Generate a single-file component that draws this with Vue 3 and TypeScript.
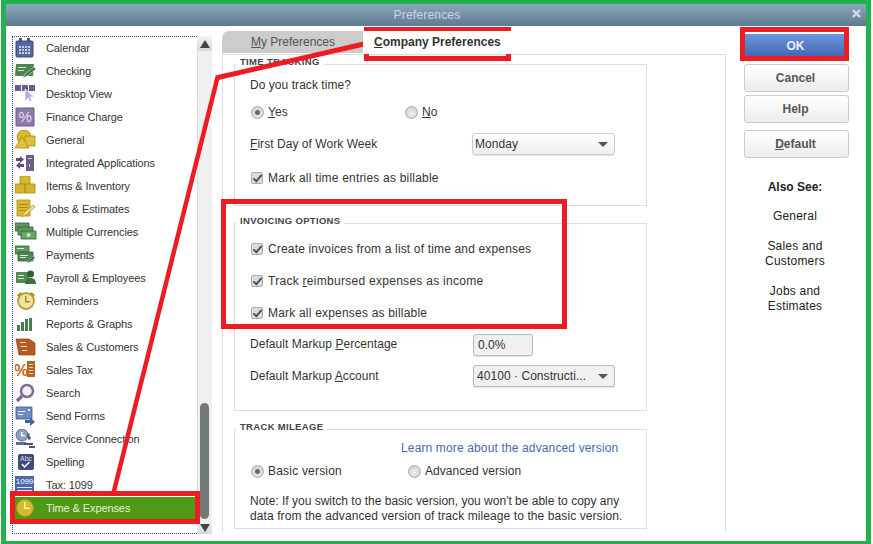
<script setup lang="ts">
interface Shape { d: string; f?: string; s?: string; w?: number }
interface Label { t: string; x: number; y: number; size: number; fill: string; bold?: boolean }
interface Pref { name: string; shapes: Shape[]; label?: Label }

const gold = '#d9b92e'
const goldDark = '#a88a1c'
const purple = '#6d5e8c'
const green = '#4b8550'
const greenDark = '#2f6038'

const circle = (cx: number, cy: number, r: number) =>
  `M${cx - r} ${cy}a${r} ${r} 0 1 0 ${2 * r} 0a${r} ${r} 0 1 0 ${-2 * r} 0z`

const prefs: Pref[] = [
  {
    name: 'Calendar',
    shapes: [
      { d: 'M2 3h15a1 1 0 0 1 1 1v14a1 1 0 0 1-1 1H2a1 1 0 0 1-1-1V4a1 1 0 0 1 1-1z', f: '#56699c', s: '#3c4b78', w: 1 },
      { d: 'M4 0h3v5H4zM12 0h3v5h-3z', f: '#47598a' },
      { d: 'M4 8h2v2H4zM7 8h2v2H7zM10 8h2v2h-2zM13 8h2v2h-2zM4 11h2v2H4zM7 11h2v2H7zM10 11h2v2h-2zM13 11h2v2h-2zM4 14h2v2H4zM7 14h2v2H7zM10 14h2v2h-2zM13 14h2v2h-2z', f: '#c6d0ee' }
    ]
  },
  {
    name: 'Checking',
    shapes: [
      { d: 'M1 3h18l-1 12H0z', f: green },
      { d: 'M3 6h8v1H3zM3 9h6v1H3z', f: '#d4ead2' },
      { d: 'M8 17l2-4 9-7 2 2-9 7z', f: '#3b7a40', s: '#d8ecd4', w: 0.6 }
    ]
  },
  {
    name: 'Desktop View',
    shapes: [
      { d: 'M0 1h6v6H0zM7 1h6v6H7zM14 1h6v6h-6z', f: purple },
      { d: 'M10 5l9 8h-4l2 4-2 1-2-4-3 3z', f: '#bcaad8', s: '#fff', w: 0.7 }
    ]
  },
  {
    name: 'Finance Charge',
    shapes: [{ d: 'M1 1h18v18H1z', f: '#8c7aa8', s: '#6b5c86', w: 1 }],
    label: { t: '%', x: 10, y: 15, size: 15, fill: '#e6e0f0' }
  },
  {
    name: 'General',
    shapes: [
      { d: circle(9, 7, 7), f: gold, s: goldDark, w: 0.8 },
      { d: 'M10 6h10v10H10z', f: '#dcc03a', s: goldDark, w: 0.8 },
      { d: 'M0 18L7 7l7 11z', f: '#e0c436', s: goldDark, w: 0.8 }
    ]
  },
  {
    name: 'Integrated Applications',
    shapes: [
      { d: 'M11 2h8v16h-8z', f: purple },
      { d: 'M13 5h4v1h-4zM14 11h1v3h-1z', f: '#d8d0e6' },
      { d: 'M1 5h4V3l4 3.5L5 10V8H1zM9 11H5V9l-4 3.5L5 16v-2h4z', f: '#5c4f78' }
    ]
  },
  {
    name: 'Items & Inventory',
    shapes: [
      { d: 'M5 0h10v8H5z', f: gold, s: goldDark, w: 0.8 },
      { d: 'M0 8h10v9H0zM10 8h10v9H10z', f: '#d4b42c', s: goldDark, w: 0.8 }
    ]
  },
  {
    name: 'Jobs & Estimates',
    shapes: [
      { d: 'M2 1h13v16H2z', f: gold, s: goldDark, w: 0.8 },
      { d: 'M4 5h9v1H4zM4 8h9v1H4zM4 11h7v1H4z', f: goldDark },
      { d: 'M7 18l2-4 9-8 2 2-9 8z', f: '#f0dc90', s: goldDark, w: 0.6 }
    ]
  },
  {
    name: 'Multiple Currencies',
    shapes: [
      { d: 'M0 1h14v8H0z', f: '#5d9860', s: greenDark, w: 0.8 },
      { d: 'M3 5h15v8H3z', f: '#5d9860', s: greenDark, w: 0.8 },
      { d: 'M6 9h15v8H6z', f: '#6aa66c', s: greenDark, w: 0.8 },
      { d: circle(13.5, 13, 2), f: '#cfe6cc' }
    ]
  },
  {
    name: 'Payments',
    shapes: [
      { d: 'M0 1h14v8H0z', f: '#5d9860', s: greenDark, w: 0.8 },
      { d: 'M3 7h15v9H3z', f: green, s: greenDark, w: 0.8 },
      { d: 'M2 3h7v1H2zM5 10h8v1H5zM5 12h6v1H5z', f: '#d8ecd4' },
      { d: 'M12 18l2-3 5-4 1 2-5 4z', f: greenDark, s: '#d8ecd4', w: 0.5 }
    ]
  },
  {
    name: 'Payroll & Employees',
    shapes: [
      { d: 'M1 4h13v11H1z', f: '#4f8c55' },
      { d: 'M3 7h6v1H3zM3 10h6v1H3z', f: '#d8ecd4' },
      { d: circle(15.5, 6, 3.5), f: greenDark },
      { d: 'M10 16c0-4 2-6 5.5-6s5.5 2 5.5 6z', f: '#3b7044' }
    ]
  },
  {
    name: 'Reminders',
    shapes: [
      { d: 'M2 4l4-3 1 2-3 3zM20 4l-4-3-1 2 3 3z', f: goldDark },
      { d: circle(11, 10, 8), f: '#f0e2a0', s: '#b99d30', w: 1.8 },
      { d: 'M10 5h1.5v5H15v1.5h-5z', f: '#a88a1c' }
    ]
  },
  {
    name: 'Reports & Graphs',
    shapes: [
      { d: 'M2 11h3v6H2zM6 8h3v9H6zM10 5h3v12h-3zM14 4h3v13h-3z', f: '#4a7a50' }
    ]
  },
  {
    name: 'Sales & Customers',
    shapes: [
      { d: 'M1 2h13l6 4v12H4z', f: '#b55a20', s: '#8a4214', w: 0.7 },
      { d: 'M5 5h6v1H5zM6 9h6v1H6zM7 13h5v1H7z', f: '#f2d8bc' }
    ]
  },
  {
    name: 'Sales Tax',
    shapes: [
      { d: 'M12 1h8v16h-8z', f: '#b8641f' },
      { d: 'M14 4h4v1h-4zM14 7h4v1h-4zM14 10h4v1h-4zM14 13h4v1h-4z', f: '#f2d8bc' }
    ],
    label: { t: '%', x: 6, y: 16, size: 16, fill: '#c2641c', bold: true }
  },
  {
    name: 'Search',
    shapes: [
      { d: 'M7 13l-5 5', s: '#7a6a94', w: 3.4 },
      { d: circle(12, 8, 6), f: '#f4f0f8', s: '#7e6e98', w: 2.6 }
    ]
  },
  {
    name: 'Send Forms',
    shapes: [
      { d: 'M1 1h16v12H1z', f: '#6f8cc0', s: '#41588c', w: 0.8 },
      { d: 'M3 5h7v1H3zM3 8h5v1H3zM13 3h2v2h-2z', f: '#e8eefa' },
      { d: 'M10 14h5v-3l5 5-5 4v-3h-5z', f: '#3f64a8' }
    ]
  },
  {
    name: 'Service Connection',
    shapes: [
      { d: circle(7, 6, 6), f: '#8ea2c4', s: '#4a5c84', w: 0.8 },
      { d: 'M6 3h1.5v3H10v1.2H6z', f: '#fff' },
      { d: 'M1 13h10v3H1z', f: '#5c6e94' },
      { d: 'M12 4l3 1-1 2 2 1-1 3-2-1zM9 14h9v2H9zM14 17h6v2h-6z', f: '#44557c' }
    ]
  },
  {
    name: 'Spelling',
    shapes: [
      { d: 'M5 2h12a2 2 0 0 1 2 2v12a2 2 0 0 1-2 2H5a2 2 0 0 1-2-2V4a2 2 0 0 1 2-2z', f: '#3d4c78' },
      { d: 'M7 12l2.500 3 5-5', s: '#fff', w: 1.5 }
    ],
    label: { t: 'Abc', x: 11, y: 8.500, size: 7, fill: '#d8def0' }
  },
  {
    name: 'Tax: 1099',
    shapes: [
      { d: 'M0 1h19v18H0z', f: '#4c68a8' },
      { d: 'M2 12h15v1H2zM2 15h15v1H2z', f: '#dfe6f6' }
    ],
    label: { t: '1099', x: 9.500, y: 9, size: 8, fill: '#fff' }
  },
  {
    name: 'Time & Expenses',
    shapes: [
      { d: circle(10, 10, 8.500), f: '#d8b82c', s: '#a88f20', w: 0.8 },
      { d: 'M9 4h1.500v5.500H15V11H9z', f: '#fff3b8' }
    ]
  }
]
</script>

<template>
  <div class="frame">
    <header class="titlebar">
      <span>Preferences</span>
      <svg class="close" viewBox="0 0 9 9" width="9" height="9">
        <path d="M1 1l7 7M8 1L1 8" stroke="#d3dce4" stroke-width="2.400" />
      </svg>
    </header>

    <div class="body">
      <aside class="sidebar">
        <ul class="list">
          <li
            v-for="pref in prefs"
            :key="pref.name"
            class="item"
            :class="{ selected: pref.name === 'Time & Expenses' }"
          >
            <svg class="icon" viewBox="0 0 22 20" width="22" height="20">
              <path
                v-for="(shape, i) in pref.shapes"
                :key="i"
                :d="shape.d"
                :fill="shape.f || 'none'"
                :stroke="shape.s"
                :stroke-width="shape.w"
              />
              <text
                v-if="pref.label"
                :x="pref.label.x"
                :y="pref.label.y"
                :font-size="pref.label.size"
                :fill="pref.label.fill"
                :font-weight="pref.label.bold ? 700 : 400"
                font-family="'Liberation Sans', sans-serif"
                text-anchor="middle"
              >{{ pref.label.t }}</text>
            </svg>
            <span>{{ pref.name }}</span>
          </li>
        </ul>
        <div class="scrollbar">
          <div class="scroll-btn"><i class="arrow up"></i></div>
          <div class="scroll-track"><div class="scroll-thumb"></div></div>
          <div class="scroll-btn down"><i class="arrow dn"></i></div>
        </div>
      </aside>

      <main class="main">
        <div class="tabs">
          <div class="tab my"><u>M</u>y Preferences</div>
          <div class="tab company"><u>C</u>ompany Preferences</div>
        </div>
        <div class="panel">
          <section class="group g1">
            <h3 class="legend">TIME TRACKING</h3>
            <div class="row h26">Do you track time?</div>
            <div class="row h28">
              <label class="opt w154"><i class="radio on"></i><span><u>Y</u>es</span></label>
              <label class="opt"><i class="radio"></i><span><u>N</u>o</span></label>
            </div>
            <div class="row h36">
              <span class="field-label"><u>F</u>irst Day of Work Week</span>
              <div class="select wide">Monday<i class="caret"></i></div>
            </div>
            <div class="row h32">
              <label class="opt roomy"><i class="check"></i><span>Mark all time entries as billable</span></label>
            </div>
          </section>

          <section class="group g2">
            <h3 class="legend">INVOICING OPTIONS</h3>
            <div class="row h32">
              <label class="opt tight"><i class="check"></i><span>Create invoices from a list of time and expenses</span></label>
            </div>
            <div class="row h32">
              <label class="opt wider"><i class="check"></i><span>Track <u>r</u>eimbursed expenses as income</span></label>
            </div>
            <div class="row h32">
              <label class="opt roomy"><i class="check"></i><span>Mark all expenses as billable</span></label>
            </div>
            <div class="row h31">
              <span class="field-label raised">Default Markup <u>P</u>ercentage</span>
              <div class="input">0.0%</div>
            </div>
            <div class="row h32">
              <span class="field-label">Default Markup <u>A</u>ccount</span>
              <div class="select filled">40100 · Constructi...<i class="caret"></i></div>
            </div>
          </section>

          <section class="group g3">
            <h3 class="legend">TRACK MILEAGE</h3>
            <div class="row h21 link-row"><a class="link">Learn more about the advanced version</a></div>
            <div class="row h26">
              <label class="opt w157"><i class="radio on"></i><span class="basic">Basic version</span></label>
              <label class="opt"><i class="radio"></i><span>Advanced version</span></label>
            </div>
            <p class="note"><span class="line-a">Note: If you switch to the basic version, you won't be able to copy any</span><br /><span class="line-b">data from the advanced version of track mileage to the basic version.</span></p>
          </section>
        </div>
      </main>

      <aside class="actions">
        <button class="btn primary">OK</button>
        <button class="btn">Cancel</button>
        <button class="btn">Help</button>
        <button class="btn spaced"><u>D</u>efault</button>
        <div class="also">
          <strong>Also See:</strong>
          <a>General</a>
          <a>Sales and<br />Customers</a>
          <a>Jobs and<br />Estimates</a>
        </div>
      </aside>
    </div>

    <svg class="marks" width="873" height="544" viewBox="0 0 873 544">
      <g fill="none" stroke="#ed1c24" stroke-width="5">
        <path d="M366.500 29.500h142v29h-142z" />
        <path d="M742.500 29.500h104v29h-104z" />
        <path d="M223.500 201.500h341v125h-341z" />
        <path d="M12.500 493.500h185v28h-185z" />
        <path d="M366 43.500L218 77.500" />
        <path d="M218 75.500L113 495" stroke-width="4.500" />
      </g>
    </svg>
  </div>
</template>

<style>
html, body {
  margin: 0;
  background: #fff;
  overflow: hidden;
}
</style>

<style scoped>
.frame {
  position: relative;
  box-sizing: border-box;
  width: 870px;
  height: 544px;
  margin-left: 1px;
  border: 5px solid #22b14c;
  border-top-width: 4px;
  border-bottom-width: 3px;
  background: #fff;
  display: flex;
  flex-direction: column;
  font-family: "Liberation Sans", Arial, sans-serif;
  font-size: 12px;
  letter-spacing: 0.05px;
  color: #333;
}

.titlebar {
  position: relative;
  flex: 0 0 22px;
  display: flex;
  align-items: center;
  justify-content: center;
  background: linear-gradient(#8ba7bf, #5f7b8e);
  color: #c9d6e0;
  font-size: 12px;
  letter-spacing: 0.2px;
  padding-right: 18px;
}

.close {
  position: absolute;
  right: 5px;
  top: 5px;
}

.body {
  flex: 1;
  display: flex;
  min-height: 0;
}

/* left list */
.sidebar {
  display: flex;
  width: 200px;
  height: 498px;
  margin: 10px 0 0 6px;
}

.list {
  box-sizing: border-box;
  width: 185px;
  margin: 0;
  padding: 0;
  list-style: none;
  border-left: 1px dotted #444;
  border-top: 1px dotted #444;
  border-bottom: 1px dotted #444;
}

.item {
  box-sizing: border-box;
  display: flex;
  align-items: center;
  height: 23px;
  padding: 0 0 2px 2px;
  gap: 9px;
  font-size: 11px;
  letter-spacing: -0.1px;
  color: #333;
}

.item.selected {
  background: #4e9a15;
  color: #e6f2d8;
}

.icon {
  flex: none;
}

.scrollbar {
  width: 15px;
  display: flex;
  flex-direction: column;
  background: #f0f0f0;
  box-shadow: inset 1px 0 0 #dcdcdc;
}

.scroll-btn {
  flex: 0 0 15px;
  display: flex;
  align-items: center;
  justify-content: center;
  background: linear-gradient(#f4f4f4, #d8d8d8);
}

.scroll-btn.down {
  flex-basis: 13px;
}

.arrow {
  width: 0;
  height: 0;
  border-left: 5px solid transparent;
  border-right: 5px solid transparent;
}

.arrow.up {
  border-bottom: 8px solid #444;
}

.arrow.dn {
  border-top: 8px solid #444;
}

.scroll-track {
  flex: 1;
  display: flex;
  flex-direction: column;
  justify-content: flex-end;
  padding: 0 3px 2px;
}

.scroll-thumb {
  height: 116px;
  border-radius: 5px;
  background: #737878;
}

/* tabs + panel */
.main {
  width: 504px;
  margin: 5px 0 9px 10px;
  display: flex;
  flex-direction: column;
}

.tabs {
  flex: 0 0 22px;
  display: flex;
  position: relative;
}

.tab {
  display: flex;
  align-items: center;
  height: 22px;
}

.tab.my {
  box-sizing: border-box;
  width: 141px;
  padding-left: 29px;
  background: #cccccc;
  border-radius: 7px 0 0 0;
  letter-spacing: 0;
  color: #555;
}

.tab.company {
  box-sizing: border-box;
  width: 148px;
  height: 23px;
  padding: 0 0 1px 11px;
  background: #fff;
  font-weight: 700;
  letter-spacing: 0;
  color: #333;
  position: relative;
  z-index: 1;
}

.panel {
  flex: 1;
  padding: 9px 0 0 11px;
  border: 1px solid #ddd;
  border-bottom: 0;
}

.group {
  position: relative;
  box-sizing: border-box;
  width: 413px;
  border: 1px solid #ddd;
  padding-left: 15px;
}

.g1 {
  height: 142px;
  padding-top: 7px;
}

.g2 {
  height: 188px;
  margin-top: 17px;
  padding-top: 9px;
}

.g3 {
  height: 100px;
  margin-top: 18px;
  padding-top: 7px;
}

.legend {
  position: absolute;
  left: 1px;
  top: -10px;
  margin: 0;
  padding: 0 4px;
  background: #fff;
  font-size: 9.500px;
  line-height: 14px;
  font-weight: 700;
  letter-spacing: 0.32px;
  color: #444;
}

.row {
  display: flex;
  align-items: center;
}

.h21 { height: 21px; }
.h26 { height: 26px; }
.h28 { height: 28px; }
.h31 { height: 31px; }
.h32 { height: 32px; }
.h36 { height: 36px; }

.link-row {
  padding-left: 151px;
}

.link {
  color: #4b68ae;
  letter-spacing: 0.14px;
}

.opt {
  display: flex;
  align-items: center;
  gap: 4px;
}

.opt.roomy {
  letter-spacing: 0.2px;
}

.opt.tight {
  letter-spacing: 0.16px;
}

.opt.wider {
  letter-spacing: 0.28px;
}

.basic {
  letter-spacing: 0.2px;
}

.w154 { width: 154px; }
.w157 { width: 157px; }

.radio {
  box-sizing: border-box;
  width: 13px;
  height: 13px;
  margin-left: 1px;
  border-radius: 50%;
  border: 1px solid #aaa;
  background: radial-gradient(circle at 50% 60%, #f0f0f0, #c8c8c8);
  display: flex;
  align-items: center;
  justify-content: center;
}

.radio.on::after {
  content: "";
  width: 5px;
  height: 5px;
  border-radius: 50%;
  background: #666;
}

.check {
  position: relative;
  box-sizing: border-box;
  width: 12px;
  height: 12px;
  margin: 0 1px;
  border: 1px solid #aaa;
  border-radius: 2px;
  background: #dcdcdc;
}

.check::after {
  content: "";
  position: absolute;
  left: 3px;
  top: 0;
  width: 3px;
  height: 7px;
  border: solid #555;
  border-width: 0 2px 2px 0;
  transform: rotate(40deg);
}

.field-label {
  width: 222px;
}

.field-label.raised {
  margin-bottom: 2px;
}

.select,
.input {
  box-sizing: border-box;
  height: 22px;
  display: flex;
  align-items: center;
  border: 1px solid #ccc;
  border-radius: 3px;
  box-shadow: 0 1px 1px #e4e4e4;
}

.select {
  position: relative;
  padding-left: 2px;
  background: linear-gradient(#fff, #eee);
}

.select.wide {
  width: 143px;
}

.select.filled {
  width: 142px;
  margin-left: 1px;
  padding-left: 3px;
  background: #f0f0f0;
  border-color: #bbb;
}

.input {
  width: 60px;
  margin-left: 1px;
  padding-left: 4px;
  background: #f0f0f0;
  border-color: #bbb;
}

.caret {
  position: absolute;
  right: 6px;
  top: 8px;
  width: 0;
  height: 0;
  border-left: 5px solid transparent;
  border-right: 5px solid transparent;
  border-top: 5px solid #555;
}

.note {
  margin: 10px 0 0;
  line-height: 15px;
}

.line-a {
  letter-spacing: 0;
}

.line-b {
  letter-spacing: 0.09px;
}

/* right buttons */
.actions {
  width: 105px;
  margin: 7px 0 0 18px;
  display: flex;
  flex-direction: column;
  align-items: stretch;
}

.btn {
  box-sizing: border-box;
  height: 28px;
  margin: 0 0 3px;
  padding: 0 2px 0 0;
  border: 1px solid #ccc;
  border-radius: 3px;
  background: linear-gradient(#fff, #ececec);
  font: 700 12px "Liberation Sans", Arial, sans-serif;
  color: #555;
}

.btn.primary {
  border: 0;
  border-radius: 0;
  border-top: 1px solid #fff;
  background: linear-gradient(#6a98dc, #4366b6 85%);
  color: #e8effa;
  padding: 0 2px 3px 0;
}

.btn.spaced {
  margin-top: 4px;
}

.also {
  margin-top: 19px;
  padding-right: 3px;
  display: flex;
  flex-direction: column;
  align-items: center;
  text-align: center;
  color: #222;
  line-height: 15px;
  letter-spacing: 0.2px;
}

.also strong {
  margin-bottom: 14px;
  letter-spacing: 0;
}

.also a {
  margin-bottom: 15px;
}

.marks {
  position: absolute;
  left: -6px;
  top: -4px;
  pointer-events: none;
}
</style>
